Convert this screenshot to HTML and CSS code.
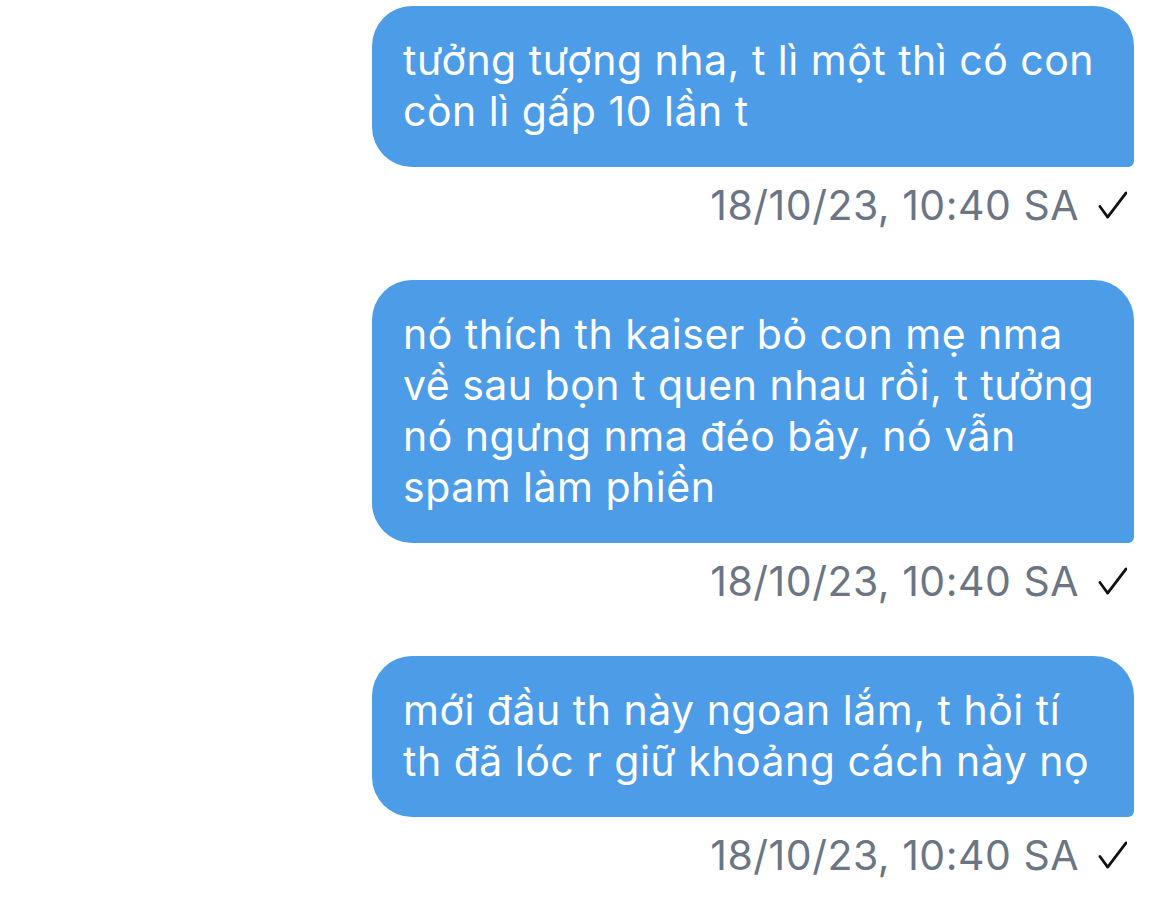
FILE: index.html
```html
<!DOCTYPE html>
<html>
    <head>
        <meta charset="utf-8">
        <title>Tin nhắn</title>
        <link rel="stylesheet" href="styles.css">
    </head>
    <body>
        <div class="chat">
            <div class="msg">
                <div class="bubble">tưởng tượng nha, t lì một thì có con<br>còn lì gấp 10 lần t</div>
                <div class="meta">
                    <span class="time">18/10/23, 10:40 SA</span>
                    <svg class="tick" viewBox="0 0 30 30"><polyline points="2,16 10,27 29,2"/></svg>
                </div>
            </div>
            <div class="msg">
                <div class="bubble">nó thích th kaiser bỏ con mẹ nma<br>về sau bọn t quen nhau rồi, t tưởng<br>nó ngưng nma đéo bây, nó vẫn<br>spam làm phiền</div>
                <div class="meta">
                    <span class="time">18/10/23, 10:40 SA</span>
                    <svg class="tick" viewBox="0 0 30 30"><polyline points="2,16 10,27 29,2"/></svg>
                </div>
            </div>
            <div class="msg">
                <div class="bubble">mới đầu th này ngoan lắm, t hỏi tí<br>th đã lóc r giữ khoảng cách này nọ</div>
                <div class="meta">
                    <span class="time">18/10/23, 10:40 SA</span>
                    <svg class="tick" viewBox="0 0 30 30"><polyline points="2,16 10,27 29,2"/></svg>
                </div>
            </div>
        </div>
    </body>
</html>
```

FILE: styles.css
```css
body{
    margin: 0;
    background: #fff;
    font-family: Inter, "Noto Sans", "DejaVu Sans", sans-serif;
}

.chat{
    display: flex;
    flex-direction: column;
    gap: 49px;
    padding: 6px 36px 0 0;
}

.msg{
    display: flex;
    flex-direction: column;
    align-items: flex-end;
}

.bubble{
    box-sizing: border-box;
    width: 762px;
    padding: 29px 31px 30px;
    background: #4c9ce8;
    color: #fff;
    font-size: 41px;
    line-height: 51px;
    letter-spacing: 0.5px;
    white-space: nowrap;
    border-radius: 40px 40px 6px 40px;
}

.meta{
    display: flex;
    align-items: center;
    gap: 19px;
    margin-top: 13px;
    padding-right: 7px;
    height: 51px;
}

.time{
    color: #6b7584;
    font-size: 41px;
    line-height: 51px;
    letter-spacing: 0.5px;
}

.tick{
    width: 29px;
    height: 29px;
    fill: none;
    stroke: #111;
    stroke-width: 2.8;
    stroke-linecap: round;
    stroke-linejoin: round;
}
```
